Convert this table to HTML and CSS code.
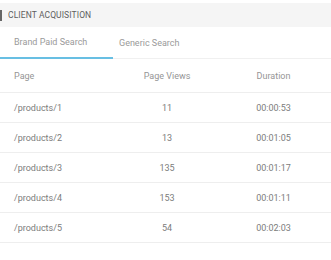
FILE: index.html
```html
<!DOCTYPE html>
<html>
<head>
<meta charset="utf-8">
<link rel="stylesheet" href="styles.css">
</head>
<body>
<div class="widget">
  <div class="title"><span class="bar"></span><span class="title-text">CLIENT ACQUISITION</span></div>
  <div class="tabs">
    <div class="tab active">Brand Paid Search</div>
    <div class="tab second">Generic Search</div>
  </div>
  <div class="table">
    <div class="row head">
      <div class="c1">Page</div><div class="c2">Page Views</div><div class="c3">Duration</div>
    </div>
    <div class="row">
      <div class="c1">/products/1</div><div class="c2">11</div><div class="c3">00:00:53</div>
    </div>
    <div class="row">
      <div class="c1">/products/2</div><div class="c2">13</div><div class="c3">00:01:05</div>
    </div>
    <div class="row">
      <div class="c1">/products/3</div><div class="c2">135</div><div class="c3">00:01:17</div>
    </div>
    <div class="row">
      <div class="c1">/products/4</div><div class="c2">153</div><div class="c3">00:01:11</div>
    </div>
    <div class="row">
      <div class="c1">/products/5</div><div class="c2">54</div><div class="c3">00:02:03</div>
    </div>
  </div>
</div>
</body>
</html>
```
FILE: styles.css
```css
html, body {
  margin: 0;
  padding: 0;
  background: #ffffff;
}
body {
  font-family: Roboto, "Liberation Sans", sans-serif;
  color: #7a7a7a;
  width: 331px;
  height: 260px;
  overflow: hidden;
}
.widget {
  padding-top: 3px;
}
.title {
  height: 24px;
  background: #f5f5f5;
  display: flex;
  align-items: center;
}
.bar {
  width: 2px;
  height: 11px;
  background: #666666;
  margin-right: 6px;
}
.title-text {
  font-size: 8.5px;
  color: #5e5e5e;
  font-weight: 400;
  letter-spacing: 0.1px;
}
.tabs {
  display: flex;
  height: 31px;
  border-bottom: 1px solid #f0f0f0;
}
.tab {
  font-size: 9px;
  color: #9a9a9a;
  display: flex;
  align-items: center;
  box-sizing: border-box;
}
.tab.active {
  width: 113px;
  padding-left: 14px;
  border-bottom: 2px solid #68bfe3;
  margin-bottom: -1px;
}
.tab.second {
  padding-left: 6px;
}
.row {
  display: grid;
  grid-template-columns: 118px 98px 1fr;
  height: 29px;
  align-items: center;
  border-bottom: 1px solid #eeeeee;
  font-size: 9px;
  color: #7c7c7c;
}
.row.head {
  height: 33px;
  color: #959595;
}
.c1 {
  padding-left: 14px;
}
.c2, .c3 {
  text-align: center;
}
```
